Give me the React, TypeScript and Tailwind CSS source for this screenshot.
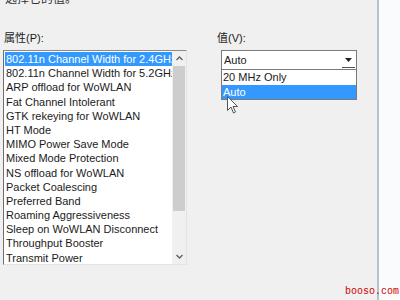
import React from "react";

const items = [
  "802.11n Channel Width for 2.4GHz",
  "802.11n Channel Width for 5.2GHz",
  "ARP offload for WoWLAN",
  "Fat Channel Intolerant",
  "GTK rekeying for WoWLAN",
  "HT Mode",
  "MIMO Power Save Mode",
  "Mixed Mode Protection",
  "NS offload for WoWLAN",
  "Packet Coalescing",
  "Preferred Band",
  "Roaming Aggressiveness",
  "Sleep on WoWLAN Disconnect",
  "Throughput Booster",
  "Transmit Power",
];

const font = { fontFamily: '"Liberation Sans", "Noto Sans CJK SC", sans-serif' };

export default function App() {
  return (
    <div
      className="relative flex w-[400px] h-[300px] overflow-hidden bg-[#f0f0f0] text-[11px] text-[#1b1b1b]"
      style={font}
    >
      <div className="flex w-[377px] flex-col">
        <div className="h-[7px] overflow-hidden pl-[5px]">
          <div className="-mt-[9px] leading-[16px] text-[12px] text-[#333]">选择它的值。</div>
        </div>
        <div className="mt-[24px] flex">
          {/* left column */}
          <div className="ml-[3px] flex w-[184px] flex-col">
            <div className="pl-[1px] h-[19px] leading-[14px] text-[11px]">属性(P):</div>
            <div className="flex h-[215px] border-l border-t border-l-[#6e6e6e] border-t-[#8a8a8a] border-r border-b border-r-[#e3e3e3] border-b-[#e3e3e3] bg-white">
              <div className="flex-1 overflow-hidden pt-[1px] pl-[1px]">
                {items.map((t, i) => (
                  <div
                    key={t}
                    className={
                      i === 0
                        ? "h-[14.2px] whitespace-nowrap bg-[#3399ff] pl-[1px] leading-[14px] text-white"
                        : "h-[14.2px] whitespace-nowrap pl-[1px] leading-[14px]"
                    }
                  >
                    {t}
                  </div>
                ))}
              </div>
              <div className="flex w-[14px] flex-col bg-[#f0f0f0]">
                <div className="flex h-[15px] items-center justify-center">
                  <svg width="7" height="5" viewBox="0 0 7 5">
                    <path d="M0.5 4 L3.5 1 L6.5 4" fill="none" stroke="#606060" strokeWidth="1.3" />
                  </svg>
                </div>
                <div className="ml-[1px] mr-[1px] h-[145px] bg-[#cdcdcd]" />
                <div className="flex-1" />
                <div className="flex h-[15px] items-center justify-center">
                  <svg width="7" height="5" viewBox="0 0 7 5">
                    <path d="M0.5 1 L3.5 4 L6.5 1" fill="none" stroke="#606060" strokeWidth="1.3" />
                  </svg>
                </div>
              </div>
            </div>
          </div>
          {/* right column */}
          <div className="ml-[30px] flex flex-col">
            <div className="h-[19px] leading-[14px] text-[11px]">值(V):</div>
            <div className="ml-[4px] flex h-[20px] w-[136px] items-center border border-[#7a7a7a] bg-white">
              <div className="flex-1 pl-[2px] leading-[14px]">Auto</div>
              <div className="mr-[1px] flex h-[16px] w-[13px] flex-col items-center justify-center border-b border-b-[#555]">
                <svg width="7" height="4" viewBox="0 0 7 4">
                  <path d="M0 0 L7 0 L3.5 4 Z" fill="#222" />
                </svg>
              </div>
            </div>
            <div className="ml-[4px] w-[136px] border border-t-0 border-[#7a7a7a] bg-white">
              <div className="h-[15px] pl-[1px] leading-[15px]">20 MHz Only</div>
              <div className="h-[14px] bg-[#3399ff] pl-[1px] leading-[14px] text-white">Auto</div>
            </div>
          </div>
        </div>
      </div>
      <div className="w-[2px] bg-[#b4c3d2]" />
      <div className="flex-1 bg-[#fafbfc]" />

      {/* mouse cursor */}
      <svg
        className="absolute left-[227px] top-[96px]"
        width="12"
        height="18"
        viewBox="0 0 12 18"
      >
        <path
          d="M0.5 0.5 L0.5 14.5 L4 11 L6.5 17 L8.5 16 L6 10.5 L10.5 10.5 Z"
          fill="#fff"
          stroke="#555"
          strokeWidth="1"
        />
      </svg>

      <div
        className="absolute right-[1px] bottom-[3px] text-[10px] leading-[11px] text-[#d40000]"
        style={{ fontFamily: '"Liberation Mono", monospace' }}
      >
        booso.com
      </div>
    </div>
  );
}
